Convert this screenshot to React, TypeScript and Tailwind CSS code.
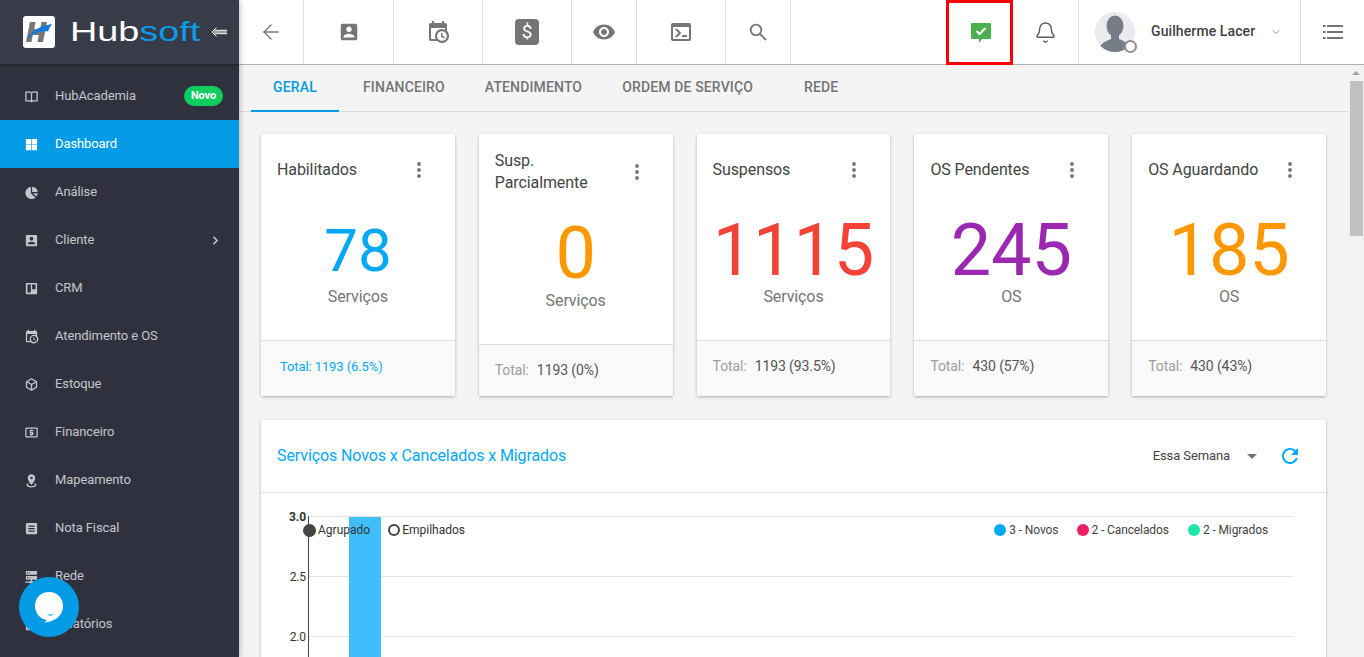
import React from "react";
import { ArrowLeft, Bell, ChevronDown, ChevronRight } from "lucide-react";

const P = {
  calClock: "M15,13H16.5V15.82L18.94,17.23L18.19,18.53L15,16.69V13M19,8H5V19H9.67C9.24,18.09 9,17.07 9,16A7,7 0 0,1 16,9C17.07,9 18.09,9.24 19,9.67V8M5,21C3.89,21 3,20.1 3,19V5C3,3.89 3.89,3 5,3H6V1H8V3H16V1H18V3H19A2,2 0 0,1 21,5V11.1C22.24,12.36 23,14.09 23,16A7,7 0 0,1 16,23C14.09,23 12.36,22.24 11.1,21H5M16,11.15A4.85,4.85 0 0,0 11.15,16C11.15,18.68 13.32,20.85 16,20.85A4.85,4.85 0 0,0 20.85,16C20.85,13.32 18.68,11.15 16,11.15Z",
  cube: "M21,16.5C21,16.88 20.79,17.21 20.47,17.38L12.57,21.82C12.41,21.94 12.21,22 12,22C11.79,22 11.59,21.94 11.43,21.82L3.53,17.38C3.21,17.21 3,16.88 3,16.5V7.5C3,7.12 3.21,6.79 3.53,6.62L11.43,2.18C11.59,2.06 11.79,2 12,2C12.21,2 12.41,2.06 12.57,2.18L20.47,6.62C20.79,6.79 21,7.12 21,7.5V16.5M12,4.15L6.04,7.5L12,10.85L17.96,7.5L12,4.15M5,15.91L11,19.29V12.58L5,9.21V15.91M19,15.91V9.21L13,12.58V19.29L19,15.91Z",
  atm: "M11 17h2v-1h1c.55 0 1-.45 1-1v-3c0-.55-.45-1-1-1h-3v-1h4V8h-2V7h-2v1h-1c-.55 0-1 .45-1 1v3c0 .55.45 1 1 1h3v1H9v2h2v1zm9-13H4c-1.11 0-1.99.89-1.99 2L2 18c0 1.11.89 2 2 2h16c1.11 0 2-.89 2-2V6c0-1.11-.89-2-2-2zm0 14H4V6h16v12z",
  marker: "M12,2C15.31,2 18,4.66 18,7.95C18,12.41 12,19 12,19C12,19 6,12.41 6,7.95C6,4.66 8.69,2 12,2M12,6A2,2 0 0,0 10,8A2,2 0 0,0 12,10A2,2 0 0,0 14,8A2,2 0 0,0 12,6M20,19C20,21.21 16.42,23 12,23C7.58,23 4,21.21 4,19C4,17.71 5.22,16.56 7.11,15.83L7.75,16.74C6.67,17.19 6,17.81 6,18.5C6,19.88 8.69,21 12,21C15.31,21 18,19.88 18,18.5C18,17.81 17.33,17.19 16.25,16.74L16.89,15.83C18.78,16.56 20,17.71 20,19Z",
  server: "M13,19H14A1,1 0 0,1 15,20H22V22H15A1,1 0 0,1 14,23H10A1,1 0 0,1 9,22H2V20H9A1,1 0 0,1 10,19H11V17H4A1,1 0 0,1 3,16V12A1,1 0 0,1 4,11H20A1,1 0 0,1 21,12V16A1,1 0 0,1 20,17H13V19M4,3H20A1,1 0 0,1 21,4V8A1,1 0 0,1 20,9H4A1,1 0 0,1 3,8V4A1,1 0 0,1 4,3M9,7H10V5H9V7M9,15H10V13H9V15M5,5V7H7V5H5M5,13V15H7V13H5Z",
  account: "M3 5v14c0 1.1.89 2 2 2h14c1.1 0 2-.9 2-2V5c0-1.1-.9-2-2-2H5c-1.11 0-2 .9-2 2zm12 4c0 1.66-1.34 3-3 3s-3-1.34-3-3 1.34-3 3-3 3 1.34 3 3zm-9 8c0-2 4-3.1 6-3.1s6 1.1 6 3.1v1H6v-1z",
  book: "M2 4h8a2 2 0 0 1 2 1.5A2 2 0 0 1 14 4h8v16h-7.5a1.5 1.5 0 0 0-1.5 1h-2a1.5 1.5 0 0 0-1.5-1H2zm2 2v12h7V6.8A.8.8 0 0 0 10.2 6zm9 .8V18h7V6h-6.2a.8.8 0 0 0-.8.8z",
  windows: "M3 3h8.5v8.5H3zM12.5 3H21v8.5h-8.5zM3 12.5h8.5V21H3zM12.5 12.5H21V21h-8.5z",
  pie: "M11 2.6v10.4l7.4 7.4A10 10 0 1 1 11 2.6zM13 2.6A10 10 0 0 1 22 11H13zM14.4 13H22a10 10 0 0 1-2.2 5.4z",
  trello: "M4 3h16a1 1 0 0 1 1 1v16a1 1 0 0 1-1 1H4a1 1 0 0 1-1-1V4a1 1 0 0 1 1-1zm1.5 2.5v13H11v-13zm7.5 0V13h5.5V5.5z",
  note: "M5 3h14a2 2 0 0 1 2 2v14a2 2 0 0 1-2 2H5a2 2 0 0 1-2-2V5a2 2 0 0 1 2-2zm2 4v2h10V7zm0 4v2h10v-2zm0 4v2h10v-2z",
  report: "M4 3h16a1 1 0 0 1 1 1v16a1 1 0 0 1-1 1H4a1 1 0 0 1-1-1V4a1 1 0 0 1 1-1zm2 3v12h12V6z",
  eye: "M12 4.5C7 4.5 2.73 7.61 1 12c1.73 4.39 6 7.5 11 7.5s9.27-3.11 11-7.5c-1.73-4.39-6-7.5-11-7.5zM12 17c-2.76 0-5-2.24-5-5s2.24-5 5-5 5 2.24 5 5-2.24 5-5 5zm0-8c-1.66 0-3 1.34-3 3s1.34 3 3 3 3-1.34 3-3-1.34-3-3-3z",
  console: "M20 19V7H4v12h16m0-16a2 2 0 0 1 2 2v14a2 2 0 0 1-2 2H4a2 2 0 0 1-2-2V5a2 2 0 0 1 2-2h16m-7 14v-2h5v2h-5m-3.42-4L5.57 9H8.4l3.3 3.3c.39.39.39 1.03 0 1.42L8.42 17H5.59l3.99-4z",
  refresh: "M17.65 6.35C16.2 4.9 14.21 4 12 4c-4.42 0-7.99 3.58-7.99 8s3.57 8 7.99 8c3.73 0 6.84-2.55 7.73-6h-2.08c-.82 2.33-3.04 4-5.65 4-3.31 0-6-2.69-6-6s2.69-6 6-6c1.66 0 3.14.69 4.22 1.78L13 11h7V4l-2.35 2.35z",
};

function I({ d, className }: { d: string; className?: string }) {
  return (
    <svg viewBox="0 0 24 24" fill="currentColor" fillRule="evenodd" className={className}>
      <path d={d} />
    </svg>
  );
}

const menu: { label: string; d: string; active?: boolean; badge?: boolean; arrow?: boolean }[] = [
  { label: "HubAcademia", d: P.book, badge: true },
  { label: "Dashboard", d: P.windows, active: true },
  { label: "Análise", d: P.pie },
  { label: "Cliente", d: P.account, arrow: true },
  { label: "CRM", d: P.trello },
  { label: "Atendimento e OS", d: P.calClock },
  { label: "Estoque", d: P.cube },
  { label: "Financeiro", d: P.atm },
  { label: "Mapeamento", d: P.marker },
  { label: "Nota Fiscal", d: P.note },
  { label: "Rede", d: P.server },
  { label: "Relatórios", d: P.report },
];

function Sidebar() {
  return (
    <aside className="w-[239px] h-full shrink-0 bg-[#2f323e] flex flex-col overflow-hidden z-10 shadow-[0_0_6px_rgba(0,0,0,0.35)]">
      <div className="h-[64px] shrink-0 bg-[#383c48] flex items-center pl-[23px] shadow-[0_1px_3px_rgba(0,0,0,0.35)]">
        <svg viewBox="0 0 32 32" className="w-[32px] h-[32px] shrink-0 rounded-[3px] bg-white">
          <path d="M7 6h5.5l-1.3 7h6l1.3-7H24l-4 20h-5.5l1.3-7h-6L8.500 26H3z" fill="#77777a" />
          <path d="M3 25C7 16 15 10 29 8c-2 2.500-3.200 5-3.800 7.500C17 14 9 17 3 25z" fill="#1279e0" />
        </svg>
        <div className="ml-[15px] w-[131px] shrink-0 font-['Liberation_Sans'] text-[27px] leading-none tracking-normal text-white origin-left scale-x-[1.4] whitespace-nowrap">
          Hub<span className="text-[#0c9be6]">soft</span>
        </div>
        <svg viewBox="0 0 16 12" className="w-[16px] h-[12px] ml-[10px] text-white" fill="none" stroke="currentColor" strokeWidth="1">
          <path d="M5.500 1.500 1 6l4.500 4.500M3.500 4.300H16M2.500 6H16M3.500 7.700H16" />
        </svg>
      </div>
      <nav className="pt-[8px] flex flex-col">
        {menu.map((m) => (
          <div
            key={m.label}
            className={`h-[48px] shrink-0 flex items-center pl-[24px] pr-[16px] text-[13px] ${
              m.active ? "bg-[#039be5] text-white" : "text-[#c4c6cb]"
            }`}
          >
            <I d={m.d} className="w-[15px] h-[15px] shrink-0" />
            <span className="ml-[16px]">{m.label}</span>
            {m.badge && (
              <span className="ml-auto h-[20px] w-[39px] rounded-full bg-[#0fce5f] text-white text-[11px] font-bold flex items-center justify-center">
                Novo
              </span>
            )}
            {m.arrow && <ChevronRight className="ml-auto mr-[1px] w-[13px] h-[13px]" strokeWidth={3} />}
          </div>
        ))}
      </nav>
    </aside>
  );
}

function Cell({ w, children, border = true }: { w: string; children: React.ReactNode; border?: boolean }) {
  return (
    <div className={`${w} h-full shrink-0 flex items-center justify-center text-[#757575] ${border ? "border-r border-[#e0e0e0]" : ""}`}>
      {children}
    </div>
  );
}

function Header() {
  return (
    <header className="h-[65px] shrink-0 bg-white border-b border-[#b0b0b0] flex items-stretch">
      <Cell w="w-[65px]"><ArrowLeft className="w-[24px] h-[24px]" strokeWidth={1.4} /></Cell>
      <Cell w="w-[90px]"><I d={P.account} className="w-[22px] h-[22px]" /></Cell>
      <Cell w="w-[89px]"><I d={P.calClock} className="w-[24px] h-[24px]" /></Cell>
      <Cell w="w-[89px]">
        <div className="w-[24px] h-[26px] rounded-[4px] bg-[#757575] text-white text-[19px] leading-[26px] text-center">$</div>
      </Cell>
      <Cell w="w-[65px]"><I d={P.eye} className="w-[24px] h-[24px]" /></Cell>
      <Cell w="w-[89px]"><I d={P.console} className="w-[24px] h-[24px]" /></Cell>
      <Cell w="w-[65px]">
        <svg viewBox="0 0 18 18" className="w-[18px] h-[18px]" fill="none" stroke="currentColor" strokeWidth="1.8">
          <circle cx="7" cy="7" r="5.300" />
          <path d="M11 11l6 6" />
        </svg>
      </Cell>
      <div className="flex-1" />
      <div className="w-[67px] h-[65px] -mb-[1px] border-[3px] border-[#ff0000] flex items-center justify-center shrink-0">
        <svg viewBox="0 0 22 22" className="w-[22px] h-[22px] ml-[3px]">
          <path d="M2 1h18a1 1 0 0 1 1 1v14a1 1 0 0 1-1 1h-8l-3 4v-4H2a1 1 0 0 1-1-1V2a1 1 0 0 1 1-1z" fill="#4caf50" />
          <path d="M6.500 9l3 3 6-6" fill="none" stroke="#fff" strokeWidth="2" />
        </svg>
      </div>
      <Cell w="w-[65px]" border={false}><Bell className="w-[23px] h-[23px] text-[#5f5f5f]" strokeWidth={1.5} /></Cell>
      <div className="w-[223px] shrink-0 border-x border-[#e0e0e0] flex items-center pl-[16px]">
        <div className="relative w-[40px] h-[40px] rounded-full bg-[#e9ebef] shrink-0">
          <svg viewBox="0 0 40 40" className="w-[40px] h-[40px] rounded-full">
            <ellipse cx="20" cy="14" rx="8.500" ry="10.500" fill="#777d86" />
            <path d="M3 40c1-8 6-10 13-13v-5h8v5c7 3 12 5 13 13z" fill="#777d86" />
          </svg>
          <span className="absolute -right-[2px] bottom-[-1px] w-[13px] h-[13px] rounded-full bg-white border-2 border-[#8f8f8f]" />
        </div>
        <span className="ml-[16px] -mt-[1px] text-[14px] font-medium text-[#424242] tracking-[0.1px]">Guilherme Lacer</span>
        <ChevronDown className="ml-[15px] w-[12px] h-[12px] text-[#757575]" strokeWidth={1.5} />
      </div>
      <div className="w-[63px] shrink-0 flex items-center justify-center text-[#757575]">
        <svg viewBox="0 0 20 16" className="w-[20px] h-[16px]" fill="currentColor">
          <rect x="0" y="1" width="2.500" height="2" /><rect x="4" y="1" width="16" height="2" />
          <rect x="0" y="7" width="2.500" height="2" /><rect x="4" y="7" width="16" height="2" />
          <rect x="0" y="13" width="2.500" height="2" /><rect x="4" y="13" width="16" height="2" />
        </svg>
      </div>
    </header>
  );
}

function Tabs() {
  const t = [
    { l: "GERAL", cls: "w-[88px] text-center text-[#039be5] border-b-2 border-[#039be5]" },
    { l: "FINANCEIRO", cls: "ml-[24px] text-[#757575]" },
    { l: "ATENDIMENTO", cls: "ml-[40px] text-[#757575]" },
    { l: "ORDEM DE SERVIÇO", cls: "ml-[40px] text-[#757575]" },
    { l: "REDE", cls: "ml-[51px] text-[#757575]" },
  ];
  return (
    <div className="h-[47px] shrink-0 border-b border-[#dcdcdc] flex items-stretch pl-[12px] text-[14px] font-medium tracking-[0.14px]">
      {t.map((x) => (
        <div key={x.l} className={`h-[47px] leading-[44px] whitespace-nowrap ${x.cls}`}>{x.l}</div>
      ))}
    </div>
  );
}

type Card = { title: string[]; num: string; color: string; size: string; unit: string; total: string; blue?: boolean };
const cards: Card[] = [
  { title: ["Habilitados"], num: "78", color: "text-[#03a9f4]", size: "text-[60px]", unit: "Serviços", total: "1193 (6.5%)", blue: true },
  { title: ["Susp.", "Parcialmente"], num: "0", color: "text-[#ff9800]", size: "text-[72px]", unit: "Serviços", total: "1193 (0%)" },
  { title: ["Suspensos"], num: "1115", color: "text-[#f44336]", size: "text-[72px]", unit: "Serviços", total: "1193 (93.5%)" },
  { title: ["OS Pendentes"], num: "245", color: "text-[#9c27b0]", size: "text-[72px]", unit: "OS", total: "430 (57%)" },
  { title: ["OS Aguardando"], num: "185", color: "text-[#ff9800]", size: "text-[72px]", unit: "OS", total: "430 (43%)" },
];

function Kebab() {
  return (
    <svg viewBox="0 0 4 16" className="w-[4px] h-[16px] text-[#757575]" fill="currentColor">
      <circle cx="2" cy="2" r="1.900" /><circle cx="2" cy="8" r="1.900" /><circle cx="2" cy="14" r="1.900" />
    </svg>
  );
}

function StatCard({ c }: { c: Card }) {
  const two = c.title.length > 1;
  return (
    <div className="h-[262px] bg-white rounded-[2px] shadow-[0_1px_3px_rgba(0,0,0,0.3)] flex flex-col">
      <div className={`${two ? "h-[76px]" : "h-[72px]"} shrink-0 flex items-center pl-[16px] pr-[34px] justify-between text-[16px] leading-[22px] text-[#444]`}>
        <div>
          {c.title.map((t) => <div key={t}>{t}</div>)}
        </div>
        <Kebab />
      </div>
      <div className="h-[134px] shrink-0 text-center">
        <div className={`${c.size} leading-[60px] ${two ? "mt-[14px]" : "mt-[15px]"} ${c.color}`}>{c.num}</div>
        <div className={`text-[16px] leading-[24px] text-[#757575] ${two ? "mt-[5px]" : "mt-[4px]"}`}>{c.unit}</div>
      </div>
      <div className={`flex-1 border-t border-[#dedede] bg-[#fafafa] flex items-center pl-[16px] text-[14px] ${two ? "" : "pb-[4px]"}`}>
        {c.blue ? (
          <span className="text-[13px] pl-[3px] text-[#03a9f4]">Total: {c.total}</span>
        ) : (
          <>
            <span className="text-[#9e9e9e]">Total:</span>
            <span className="ml-[8px] text-[#555]">{c.total}</span>
          </>
        )}
      </div>
    </div>
  );
}

function Chart() {
  const ticks = [{ l: "3.0", y: 23 }, { l: "2.5", y: 83 }, { l: "2.0", y: 143 }];
  return (
    <div className="relative h-[200px]">
      <svg viewBox="0 0 1065 200" className="w-[1065px] h-[200px]">
        {ticks.map((t) => (
          <g key={t.l}>
            <line x1="47" x2="1032" y1={t.y + 0.5} y2={t.y + 0.5} stroke="#e4e4e4" />
            <text x="45" y={t.y + 5} textAnchor="end" fontSize="12" fill="#333" fontWeight={t.l === "3.0" ? 700 : 400}>{t.l}</text>
          </g>
        ))}
        <line x1="47.5" x2="47.5" y1="23" y2="200" stroke="#444" />
        <rect x="88" y="24" width="32" height="176" fill="#40bdfb" />
      </svg>
      <div className="absolute left-[42px] top-[30px] flex items-center text-[12px] text-[#333] leading-[14px] tracking-normal">
        <span className="w-[13px] h-[13px] rounded-full bg-[#444]" />
        <span className="ml-[2px]">Agrupado</span>
        <span className="ml-[18px] w-[12px] h-[12px] rounded-full border-2 border-[#444]" />
        <span className="ml-[2px]">Empilhados</span>
      </div>
      <div className="absolute right-[58px] top-[30px] flex items-center text-[12px] text-[#444] leading-[14px]">
        <span className="w-[12px] h-[12px] rounded-full bg-[#03a9f4]" />
        <span className="ml-[3px]">3 - Novos</span>
        <span className="ml-[19px] w-[12px] h-[12px] rounded-full bg-[#e91e63]" />
        <span className="ml-[2px]">2 - Cancelados</span>
        <span className="ml-[19px] w-[12px] h-[12px] rounded-full bg-[#1de9a6]" />
        <span className="ml-[3px]">2 - Migrados</span>
      </div>
    </div>
  );
}

function Scrollbar() {
  return (
    <div className="w-[16px] shrink-0 bg-[#f2f2f2] flex flex-col">
      <div className="h-[16px] flex items-center justify-center shrink-0">
        <span className="w-0 h-0 border-x-[4px] border-x-transparent border-b-[4px] border-b-[#a3a3a3]" />
      </div>
      <div className="ml-[2px] w-[13px] h-[155px] bg-[#c1c1c1]" />
    </div>
  );
}

export default function App() {
  return (
    <div className="w-[1364px] h-[657px] overflow-hidden flex font-[Roboto,sans-serif] tracking-[-0.1px] relative bg-[#f4f4f4]">
      <Sidebar />
      <div className="flex-1 min-w-0 flex flex-col">
        <Header />
        <div className="flex-1 min-h-0 flex">
          <div className="flex-1 min-w-0 overflow-hidden flex flex-col">
            <Tabs />
            <div className="pt-[22px] pl-[22px] pr-[22px]">
              <div className="grid grid-cols-5 gap-[24px]">
                {cards.map((c) => <StatCard key={c.num + c.title[0]} c={c} />)}
              </div>
              <div className="mt-[24px] bg-white rounded-[2px] shadow-[0_1px_3px_rgba(0,0,0,0.3)]">
                <div className="h-[73px] border-b border-[#e0e0e0] flex items-center pl-[16px] pr-[24px]">
                  <span className="text-[16px] text-[#03a9f4]">Serviços Novos x Cancelados x Migrados</span>
                  <span className="ml-auto text-[13px] text-[#444]">Essa Semana</span>
                  <span className="ml-[17px] w-0 h-0 border-x-[5px] border-x-transparent border-t-[5px] border-t-[#757575]" />
                  <I d={P.refresh} className="ml-[21px] w-[24px] h-[24px] text-[#03a9f4]" />
                </div>
                <Chart />
              </div>
            </div>
          </div>
          <Scrollbar />
        </div>
      </div>
      <div className="absolute left-[19px] top-[577px] w-[60px] h-[60px] rounded-full bg-[#039be5] flex items-center justify-center z-20">
        <svg viewBox="0 0 30 32" className="w-[30px] h-[32px]">
          <path d="M15 1C6.7 1 1 7 1 15c0 7 5 13 12 14l-3 2.500c6 0 19-4 19-16.500C29 7 23 1 15 1z" fill="#fff" />
          <path d="M13 23.500c2 1.500 5 1.500 7 0z" fill="#039be5" />
        </svg>
      </div>
    </div>
  );
}
